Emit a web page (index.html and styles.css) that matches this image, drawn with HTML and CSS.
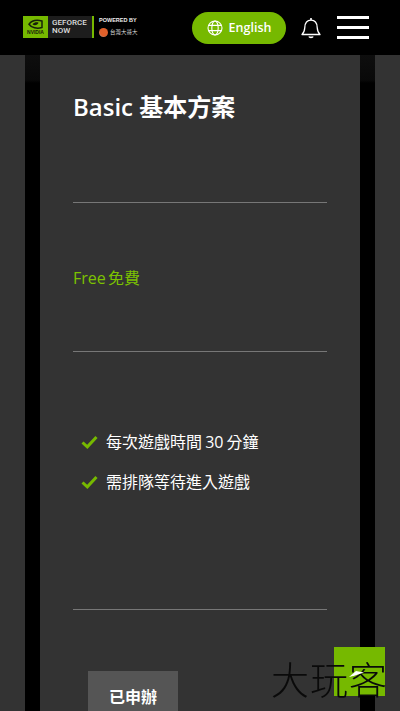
FILE: index.html
```html
<!DOCTYPE html>
<html lang="zh-TW">
<head>
  <meta charset="UTF-8">
  <meta name="viewport" content="width=device-width, initial-scale=1.0">
  <title>GeForce NOW 方案</title>
  <link rel="stylesheet" href="styles.css">
</head>
<body>
  <header class="topbar">
    <div class="brand">
      <div class="brand-mark">
        <svg class="nv-eye" width="15" height="10" viewBox="0 0 15 10">
          <path d="M1 5.200C3.500 1.800 8.500.600 14 2v6.500C9 10 3.500 8.800 1 5.200z" fill="none" stroke="#16200a" stroke-width="1.500"/>
          <path d="M4.500 5.200c1.800-1.900 4.400-2.300 6-1.400-.8 2.200-4 3.300-6 1.400z" fill="#16200a"/>
        </svg>
        <span class="nv-word">NVIDIA</span>
      </div>
      <div class="brand-name">GEFORCE<br>NOW</div>
      <div class="brand-partner">
        <span class="powered">POWERED BY</span>
        <span class="partner-row"><i class="partner-dot"></i>台灣大哥大</span>
      </div>
    </div>
    <button class="lang-btn">
      <svg width="16" height="16" viewBox="0 0 16 16" fill="none" stroke="#fff" stroke-width="1.1">
        <circle cx="8" cy="8" r="7"/>
        <ellipse cx="8" cy="8" rx="3.2" ry="7"/>
        <path d="M1.6 5.4h12.8M1.6 10.6h12.8"/>
      </svg>
      English
    </button>
    <svg class="bell" width="20" height="22" viewBox="0 0 20 22" fill="none" stroke="#fff" stroke-width="1.3">
      <path d="M1 17.500c2-1.800 2.600-3.600 2.800-7C4 6 6.400 3.200 10 3.200s6 2.800 6.200 7.300c.2 3.400.8 5.200 2.800 7z" stroke-linejoin="round"/>
      <path d="M10 1v2.200" stroke-width="1.600"/>
      <path d="M8 19.500c.4 1.200 3.600 1.200 4 0" stroke-width="1.600"/>
    </svg>
    <div class="burger"><span></span><span></span><span></span></div>
  </header>

  <main class="plans">
    <div class="plan plan-side"></div>
    <section class="plan">
      <h2 class="plan-title">Basic 基本方案</h2>
      <hr class="divider">
      <p class="plan-price">Free 免費</p>
      <hr class="divider">
      <ul class="features">
        <li><svg width="17" height="14" viewBox="0 0 17 14"><path d="M1.500 7.500l4.800 4.300L15.500 2" fill="none" stroke="#76b900" stroke-width="3"/></svg>每次遊戲時間 30 分鐘</li>
        <li><svg width="17" height="14" viewBox="0 0 17 14"><path d="M1.500 7.500l4.800 4.300L15.500 2" fill="none" stroke="#76b900" stroke-width="3"/></svg>需排隊等待進入遊戲</li>
      </ul>
      <hr class="divider">
      <button class="apply-btn">已申辦</button>
    </section>
    <div class="plan plan-side"></div>
  </main>

  <div class="watermark">
    <div class="watermark-box"></div>
    <span class="watermark-text">大玩客</span>
    <svg class="watermark-glint" width="16" height="8" viewBox="0 0 16 8"><path d="M0 7L7 1l8 1.500-9 3z" fill="#fff"/></svg>
  </div>
</body>
</html>
```

FILE: styles.css
```css
/* Reset */
* {
  margin: 0;
  padding: 0;
  box-sizing: border-box;
}

html, body {
  height: 100%;
  overflow: hidden;
}

body {
  font-family: "Open Sans", "Noto Sans CJK TC", sans-serif;
  background-color: #000;
  color: #fff;
}

/* Header */
.topbar {
  height: 55px;
  background-color: #000;
  display: flex;
  align-items: center;
  padding: 0 31px 0 23px;
}

.brand {
  display: flex;
  align-items: center;
  height: 22px;
  margin-right: auto;
  margin-top: -1px;
}

.brand-mark {
  width: 25px;
  height: 22px;
  background-color: #76b900;
  display: flex;
  flex-direction: column;
  align-items: center;
  justify-content: center;
}

.nv-word {
  font-family: "Liberation Sans", sans-serif;
  font-size: 5px;
  font-weight: 700;
  color: #16200a;
  line-height: 6px;
}

.brand-name {
  width: 46px;
  height: 22px;
  background-color: #1d1d1d;
  border-right: 2px solid #76b900;
  font-family: Roboto, sans-serif;
  font-size: 8px;
  font-weight: 500;
  line-height: 8px;
  padding: 3px 0 0 4px;
  color: #ddd;
}

.brand-partner {
  margin-left: 5px;
  display: flex;
  flex-direction: column;
  gap: 4px;
}

.powered {
  font-family: "Liberation Sans", sans-serif;
  font-size: 5.500px;
  font-weight: 700;
  line-height: 7px;
  color: #eee;
}

.partner-row {
  display: flex;
  align-items: center;
  gap: 2px;
  font-size: 5.500px;
  line-height: 9px;
  color: #ddd;
}

.partner-dot {
  width: 9px;
  height: 9px;
  border-radius: 50%;
  background: radial-gradient(circle at 60% 40%, #e0602a 55%, #a9a9a9);
}

.lang-btn {
  width: 94px;
  height: 32px;
  border: none;
  border-radius: 16px;
  background-color: #76b900;
  color: #fff;
  font-family: inherit;
  font-size: 12.500px;
  font-weight: 600;
  display: flex;
  align-items: center;
  justify-content: center;
  gap: 6px;
  margin-right: 15px;
}

.bell {
  margin-right: 16px;
}

.burger {
  width: 32px;
  display: flex;
  flex-direction: column;
  gap: 7px;
}

.burger span {
  height: 3px;
  background-color: #fff;
}

/* Plans */
.plans {
  display: flex;
  justify-content: center;
  gap: 15px;
  overflow: hidden;
  height: 656px;
  background: linear-gradient(#0e0e0e, #090909 25px, #000 28px);
}

.plan {
  flex: 0 0 320px;
  background-color: #333;
  padding: 33px 33px 0;
}

.plan-title {
  font-size: 24px;
  font-weight: 600;
  line-height: 38px;
  height: 114px;
}

.divider {
  border: none;
  border-top: 1px solid #777;
}

.plan-price {
  color: #7cc200;
  font-size: 16px;
  line-height: 24px;
  height: 148px;
  padding-top: 63px;
  word-spacing: -2px;
}

.features {
  list-style: none;
  height: 257px;
  padding: 78px 0 0 8px;
}

.features li {
  display: flex;
  align-items: center;
  gap: 8px;
  font-size: 16px;
  line-height: 24px;
  margin-bottom: 16px;
  word-spacing: -1px;
}

.apply-btn {
  display: block;
  width: 90px;
  height: 50px;
  margin: 61px 0 0 15px;
  border: none;
  background-color: #555;
  color: #fff;
  font-family: inherit;
  font-size: 16px;
  font-weight: 700;
}

/* Watermark */
.watermark {
  position: fixed;
  left: 271px;
  top: 647px;
  width: 120px;
  height: 50px;
}

.watermark-box {
  position: absolute;
  left: 63px;
  top: 0;
  width: 51px;
  height: 49px;
  background-color: #76b900;
}

.watermark-text {
  position: absolute;
  left: 0;
  top: 9px;
  font-size: 38px;
  font-weight: 300;
  letter-spacing: 1px;
  line-height: 46px;
  color: #0a0a0a;
  white-space: nowrap;
}

.watermark-glint {
  position: absolute;
  left: 78px;
  top: 23px;
}
```
